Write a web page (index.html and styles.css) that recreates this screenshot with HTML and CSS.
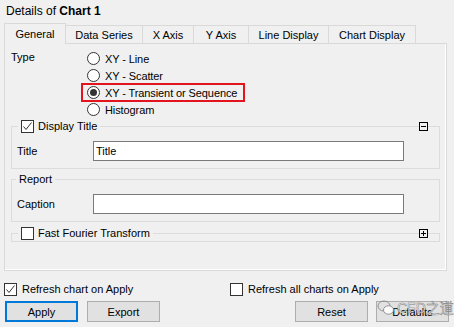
FILE: index.html
```html
<!DOCTYPE html>
<html lang="en">
<head>
    <meta charset="UTF-8">
    <title>Details of Chart 1</title>
    <link rel="stylesheet" href="styles.css">
</head>
<body>
    <div class="title">Details of <b>Chart 1</b></div>

    <div class="tabs">
        <div class="tab tab-general active">General</div>
        <div class="tab tab-series">Data Series</div>
        <div class="tab tab-x">X Axis</div>
        <div class="tab tab-y">Y Axis</div>
        <div class="tab tab-line">Line Display</div>
        <div class="tab tab-chart">Chart Display</div>
    </div>

    <div class="panel">
        <div class="type-row">
            <div class="type-label">Type</div>
            <div class="radio-list">
                <div class="radio-item"><span class="radio"></span>XY - Line</div>
                <div class="radio-item"><span class="radio"></span>XY - Scatter</div>
                <div class="radio-item marked"><span class="radio checked"></span>XY - Transient or Sequence</div>
                <div class="radio-item"><span class="radio"></span>Histogram</div>
            </div>
        </div>

        <div class="group group-title">
            <div class="group-head">
                <span class="group-label"><span class="check"><svg width="11" height="11" viewBox="0 0 11 11"><path d="M1.5 5.5 L4 8.5 L9.5 1.5" fill="none" stroke="#333" stroke-width="1"/></svg></span>Display Title</span>
                <span class="toggle"><span class="bar"></span></span>
            </div>
            <div class="field-row">
                <label>Title</label>
                <div class="input">Title</div>
            </div>
        </div>

        <div class="group group-report">
            <div class="group-head">
                <span class="group-label plain">Report</span>
            </div>
            <div class="field-row">
                <label>Caption</label>
                <div class="input"></div>
            </div>
        </div>

        <div class="group group-fft">
            <div class="group-head">
                <span class="group-label"><span class="check"></span>Fast Fourier Transform</span>
                <span class="toggle"><span class="bar"></span><span class="bar bar-v"></span></span>
            </div>
        </div>
    </div>

    <div class="options">
        <div class="option option-first"><span class="check"><svg width="11" height="11" viewBox="0 0 11 11"><path d="M1.5 5.5 L4 8.5 L9.5 1.5" fill="none" stroke="#333" stroke-width="1"/></svg></span>Refresh chart on Apply</div>
        <div class="option"><span class="check"></span>Refresh all charts on Apply</div>
    </div>

    <div class="buttons">
        <button class="btn btn-default">Apply</button>
        <button class="btn">Export</button>
        <button class="btn btn-push">Reset</button>
        <button class="btn">Defaults</button>
    </div>

    <!-- watermark from the original screenshot -->
    <div class="watermark">
        <svg width="18" height="17" viewBox="0 0 18 17">
            <ellipse cx="7" cy="7" rx="6" ry="5" fill="none" stroke="#8a8a8a" stroke-width="1"/>
            <ellipse cx="11.5" cy="11" rx="5" ry="4.2" fill="#fff" stroke="#8a8a8a" stroke-width="1"/>
        </svg>
        <span>CFD之道</span>
    </div>
</body>
</html>
```

FILE: styles.css
```css
body {
    margin: 0;
    background-color: #f0f0f0;
    font-family: "Liberation Sans", Arial, sans-serif;
    font-size: 11px;
    color: #000;
}

.title {
    padding: 4px 0 0 6px;
    height: 23px;
    line-height: 14px;
    font-size: 12px;
    box-sizing: border-box;
}

.tabs {
    display: flex;
    align-items: flex-end;
    margin-left: 4px;
    height: 20px;
}
.tab {
    height: 18px;
    line-height: 18px;
    text-align: center;
    border: 1px solid #d9d9d9;
    border-bottom: none;
    border-left: none;
    box-sizing: border-box;
    background-color: #f0f0f0;
}
.tab.active {
    height: 21px;
    line-height: 20px;
    border-left: 1px solid #d9d9d9;
    border-right: 1px solid #d9d9d9;
    position: relative;
    z-index: 1;
    margin-bottom: -1px;
}
.tab-general { width: 62px; }
.tab-series { width: 77px; }
.tab-x { width: 51px; }
.tab-y { width: 55px; }
.tab-line { width: 80px; }
.tab-chart { width: 87px; }

.panel {
    margin: 0 7px 0 4px;
    height: 228px;
    box-sizing: border-box;
    border: 1px solid #d9d9d9;
    box-shadow: inset -1px -1px 0 #fff;
    padding: 6px 6px 0 6px;
}

.type-row {
    display: flex;
}
.type-label {
    width: 76px;
    line-height: 17px;
    margin-top: -1px;
}
.radio-list {
    display: flex;
    flex-direction: column;
}
.radio-item {
    display: flex;
    align-items: center;
    height: 17px;
    gap: 5px;
    letter-spacing: -0.1px;
}
.radio-item.marked {
    position: relative;
}
.radio-item.marked::after {
    content: "";
    position: absolute;
    left: -6px;
    top: -1px;
    width: 160px;
    height: 15px;
    border: 2px solid #e3141e;
}
.radio {
    width: 13px;
    height: 13px;
    box-sizing: border-box;
    border: 1px solid #333;
    border-radius: 50%;
    background-color: #fff;
    display: flex;
    align-items: center;
    justify-content: center;
}
.radio.checked::before {
    content: "";
    width: 7px;
    height: 7px;
    border-radius: 50%;
    background-color: #333;
}

.check {
    width: 13px;
    height: 13px;
    box-sizing: border-box;
    border: 1px solid #333;
    background-color: #fff;
    display: inline-flex;
    align-items: center;
    justify-content: center;
}

/* group boxes: the head row sits on the top border line */
.group {
    border: 1px solid #dcdcdc;
}
.group-head {
    display: flex;
    align-items: center;
    justify-content: space-between;
    height: 14px;
    margin: -8px 11px 0 6px;
}
.group-label {
    display: flex;
    align-items: center;
    gap: 4px;
    padding: 0 3px;
    background-color: #f0f0f0;
}
.group-label.plain {
    margin-left: -2px;
}
.group-title {
    margin-top: 8px;
}
.group-report {
    margin-top: 10px;
}
.group-fft {
    margin-top: 11px;
    padding-bottom: 1px;
}

.toggle {
    position: relative;
    width: 9px;
    height: 9px;
    box-sizing: border-box;
    border: 1px solid #000;
    background-color: #f0f0f0;
    display: flex;
    align-items: center;
    justify-content: center;
}
.toggle .bar {
    position: absolute;
    width: 5px;
    height: 1px;
    background-color: #000;
}
.toggle .bar-v {
    width: 1px;
    height: 5px;
}

.field-row {
    display: flex;
    align-items: center;
    padding-left: 5px;
    margin: 8px 0 7px 0;
}
.field-row label {
    width: 76px;
}
.input {
    width: 311px;
    height: 20px;
    box-sizing: border-box;
    border: 1px solid #7a7a7a;
    background-color: #fff;
    padding-left: 2px;
    line-height: 18px;
}

.options {
    display: flex;
    margin: 11px 0 0 4px;
    height: 14px;
}
.option {
    display: flex;
    align-items: center;
    gap: 5px;
}
.option-first {
    width: 226px;
}

.buttons {
    display: flex;
    gap: 9px;
    margin-top: 5px;
    padding: 0 5px;
}
.btn {
    width: 73px;
    height: 21px;
    box-sizing: border-box;
    border: 1px solid #adadad;
    background-color: #e1e1e1;
    font-family: "Liberation Sans", Arial, sans-serif;
    font-size: 11px;
    color: #000;
    padding: 0;
}
.btn-default {
    border: 2px solid #0078d7;
}
.btn-push {
    margin-left: auto;
}
.btn-push + .btn {
    margin-left: -1px;
}

.watermark {
    position: absolute;
    left: 377px;
    top: 297px;
    display: flex;
    align-items: center;
    gap: 2px;
    opacity: 0.9;
}
.watermark span {
    font-family: "Liberation Sans", "Noto Sans CJK SC", sans-serif;
    font-size: 14px;
    color: #fff;
    -webkit-text-stroke: 0.5px #6f6f6f;
}
```
